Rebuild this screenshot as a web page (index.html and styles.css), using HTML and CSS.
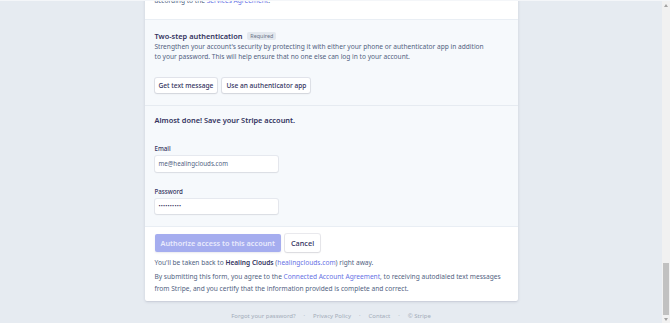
FILE: index.html
```html
<!DOCTYPE html>
<html lang="en">
<head>
  <meta charset="UTF-8">
  <meta name="viewport" content="width=device-width, initial-scale=1.0">
  <title>Stripe – Save your account</title>
  <link rel="stylesheet" href="styles.css">
</head>
<body>
  <div class="viewport">
    <main class="page">
      <div class="card">
        <section class="card-top">
          <p>Payouts will be sent to your bank account on a daily rolling basis</p>
          <p>according to the <a href="#">Services Agreement</a>.</p>
        </section>

        <div class="card-body">
          <section class="two-step">
            <h3>Two-step authentication <span class="badge">Required</span></h3>
            <p class="desc">Strengthen your account's security by protecting it with either your phone or authenticator app in addition to your password. This will help ensure that no one else can log in to your account.</p>
            <div class="btn-row">
              <button class="btn">Get text message</button>
              <button class="btn">Use an authenticator app</button>
            </div>
          </section>

          <section class="save">
            <h3>Almost done! Save your Stripe account.</h3>
            <label class="field-label">Email</label>
            <div class="input">me@healingclouds.com</div>
            <label class="field-label">Password</label>
            <div class="input dots">••••••••••</div>
          </section>
        </div>

        <section class="card-footer">
          <div class="btn-row">
            <button class="btn btn-primary">Authorize access to this account</button>
            <button class="btn btn-cancel">Cancel</button>
          </div>
          <p class="note">You'll be taken back to <strong>Healing Clouds</strong> (<a href="#">healingclouds.com</a>) right away.</p>
          <p class="note legal">By submitting this form, you agree to the <a href="#">Connected Account Agreement</a>, to receiving autodialed text messages from Stripe, and you certify that the information provided is complete and correct.</p>
        </section>
      </div>

      <footer class="links">
        <a href="#">Forgot your password?</a>
        <span class="sep">•</span>
        <a href="#">Privacy Policy</a>
        <span class="sep">•</span>
        <a href="#">Contact</a>
        <span class="sep">•</span>
        <a href="#">© Stripe</a>
      </footer>
    </main>

    <!-- fake browser scrollbar, page is scrolled to the bottom -->
    <div class="scrollbar">
      <span class="arrow up"></span>
      <span class="thumb"></span>
      <span class="arrow down"></span>
    </div>
  </div>
</body>
</html>
```

FILE: styles.css
```css
* {
  box-sizing: border-box;
}
body {
  margin: 0;
  font-family: "Noto Sans", "Open Sans", sans-serif;
  color: #525f7f;
  background-color: #e6ebf1;
  overflow: hidden;
}
a {
  color: #6772e5;
  text-decoration: none;
}
p {
  margin: 0;
}
.viewport {
  display: flex;
  height: 323px;
  overflow: hidden;
  border-top: 1px solid #f4f6f9;
}
.page {
  flex: 1;
  display: flex;
  flex-direction: column;
  align-items: center;
}
.card {
  width: 373px;
  margin-top: -15px;
  background-color: #fff;
  border-radius: 2px;
  box-shadow: 0 1px 3px rgba(50, 50, 93, 0.15), 0 1px 0 rgba(0, 0, 0, 0.03);
  overflow: hidden;
}
.card-top {
  padding: 0 10px 13px;
  font-size: 6.6px;
  line-height: 10px;
  border-bottom: 1px solid #e9eef4;
}
.card-body {
  background-color: #f6f9fc;
  border-bottom: 1px solid #e9eef4;
}
.two-step {
  padding: 11px 10px 12px;
  border-bottom: 1px solid #e6ebf1;
}
h3 {
  margin: 0;
  font-size: 7.4px;
  line-height: 11px;
  font-weight: 600;
  color: #32325d;
}
.badge {
  display: inline-block;
  margin-left: 3px;
  padding: 0 3px;
  font-size: 5.4px;
  line-height: 8px;
  font-weight: 400;
  color: #697386;
  background-color: #e3e8ee;
  border-radius: 2px;
  vertical-align: 1px;
}
.desc {
  font-size: 6.6px;
  line-height: 10px;
  width: 335px;
}
.btn-row {
  display: flex;
  gap: 5px;
  margin-top: 16px;
}
.btn {
  font-family: inherit;
  font-size: 6.6px;
  font-weight: 500;
  height: 15px;
  padding: 0 4px;
  color: #32325d;
  background-color: #fff;
  border: none;
  border-radius: 2px;
  box-shadow: 0 0 0 1px rgba(50, 50, 93, 0.1), 0 1px 2px rgba(0, 0, 0, 0.08);
}
.save {
  padding: 9px 10px 12px;
}
.field-label {
  display: block;
  margin-top: 18px;
  font-size: 6.2px;
  line-height: 9px;
  font-weight: 500;
  color: #32325d;
}
.field-label + .input {
  margin-top: 3px;
}
.save .input + .field-label {
  margin-top: 15px;
}
.input {
  width: 123px;
  height: 15.5px;
  padding: 0 4px;
  font-size: 6.2px;
  line-height: 15.5px;
  color: #525f7f;
  background-color: #fff;
  border-radius: 2px;
  box-shadow: 0 0 0 1px rgba(50, 50, 93, 0.08), 0 1px 2px rgba(0, 0, 0, 0.06);
}
.dots {
  font-size: 5.5px;
  letter-spacing: 0.2px;
  color: #32325d;
}
.card-footer {
  padding: 7px 10px 7px;
}
.card-footer .btn-row {
  margin-top: 0;
  gap: 4px;
}
.card-footer .btn {
  height: 18px;
  font-size: 7.3px;
  padding: 0 6px;
}
.btn-primary {
  font-weight: 600;
  color: #e9ebfc;
  background-color: #a5adef;
  box-shadow: 0 1px 2px rgba(50, 50, 93, 0.1);
}
.btn-cancel {
  font-weight: 500;
}
.note {
  margin-top: 6px;
  font-size: 6.6px;
  line-height: 10px;
}
.note strong {
  font-weight: 600;
  color: #32325d;
}
.legal {
  margin-top: 3px;
  line-height: 11.5px;
}
.links {
  display: flex;
  gap: 8px;
  margin-top: 10px;
  font-size: 6px;
  line-height: 10px;
}
.links a {
  color: #a3acb9;
}
.sep {
  color: #c1c9d2;
  font-size: 4px;
}
.scrollbar {
  width: 8px;
  display: flex;
  flex-direction: column;
  align-items: center;
  background-color: #f1f1f1;
  padding: 3px 0 2px;
}
.arrow {
  width: 0;
  height: 0;
  border-left: 2.5px solid transparent;
  border-right: 2.5px solid transparent;
}
.arrow.up {
  border-bottom: 3px solid #a3a3a3;
}
.arrow.down {
  margin-top: 3px;
  border-top: 3px solid #a3a3a3;
}
.thumb {
  width: 6px;
  height: 52px;
  margin-top: auto;
  background-color: #c1c1c1;
}
```
